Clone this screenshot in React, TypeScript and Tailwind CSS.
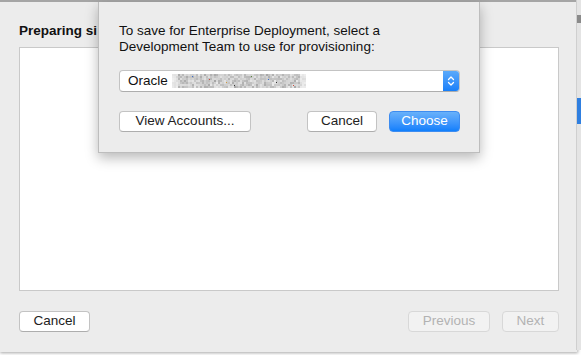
import React from 'react';

const font = { fontFamily: '"Liberation Sans", Arial, sans-serif' };

// blurred team name: a field of gray specks
function Smudge() {
  const cells: React.ReactElement[] = [];
  let seed = 7;
  const rnd = () => {
    seed = (seed * 9301 + 49297) % 233280;
    return seed / 233280;
  };
  for (let y = 0; y < 14; y += 2) {
    for (let x = 0; x < 134; x += 2) {
      const edge = x < 6 || x > 126 ? 0.5 : 1;
      const g = Math.floor(165 + rnd() * 55);
      cells.push(
        <rect key={`${x}-${y}`} x={x} y={y} width={2} height={2} fill={`rgb(${g},${g},${g})`} opacity={edge * (0.6 + rnd() * 0.4)} />
      );
    }
  }
  const dots = ['#3b6fd1', '#d14a3b', '#d19a3b', '#333', '#5a8a3b', '#3b6fd1', '#333', '#d14a3b'];
  dots.forEach((c, i) => {
    cells.push(<rect key={`d${i}`} x={20 + i * 14 + (i % 3) * 3} y={2 + (i % 4) * 3} width={1} height={1} fill={c} />);
  });
  return (
    <svg width="134" height="14" className="ml-1 shrink-0">
      {cells}
    </svg>
  );
}

function MacButton({ children, disabled, primary, className = '' }: { children: React.ReactNode; disabled?: boolean; primary?: boolean; className?: string }) {
  if (primary) {
    return (
      <div className={`h-[21px] rounded-[4px] border border-[#3d8cf0] bg-gradient-to-b from-[#68b1fa] to-[#0d7ffc] text-white text-[13.5px] flex items-center justify-center ${className}`}>
        {children}
      </div>
    );
  }
  return (
    <div
      className={`h-[21px] rounded-[4px] border text-[13.5px] flex items-center justify-center ${
        disabled ? 'bg-[#f2f2f2] border-[#d8d8d8] text-[#b2b2b2]' : 'bg-white border-[#c3c3c3] border-b-[#adadad] text-[#222]'
      } ${className}`}
    >
      {children}
    </div>
  );
}

export default function App() {
  return (
    <div className="w-[581px] h-[355px] relative overflow-hidden bg-white" style={font}>
      {/* window behind, peeking on the right */}
      <div className="absolute right-0 top-0 w-[5px] h-[350px] bg-[#e4e4e4] border-l border-[#cfcfcf]">
        <div className="mt-[15px] h-[8px] bg-[#8a8a8a]" />
        <div className="mt-[75px] h-[26px] bg-[#2f7fe0]" />
      </div>

      {/* main window */}
      <div className="w-[578px] h-[352px] bg-[#ececec] border-t-2 border-[#a5a5a5] border-r border-r-[#d4d4d4] shadow-[0_1px_3px_rgba(0,0,0,0.35)] flex flex-col pl-[19px] pr-[18px]">
        <div className="pt-[21px] h-[45px] w-[79px] overflow-hidden text-[13.5px] font-bold leading-4 text-[#111] whitespace-nowrap">Preparing si</div>
        <div className="h-[244px] bg-white border border-[#c9c9c9]" />
        <div className="mt-[20px] flex items-center">
          <MacButton className="w-[71px]">Cancel</MacButton>
          <div className="flex-1" />
          <MacButton disabled className="w-[82px]">Previous</MacButton>
          <MacButton disabled className="w-[57px] ml-[12px]">Next</MacButton>
        </div>
      </div>

      {/* sheet */}
      <div className="absolute left-[98px] top-[2px] w-[382px] h-[151px] bg-[#ececec] border-l border-r border-b border-[#bdbdbd] shadow-[0_5px_12px_rgba(0,0,0,0.28)] pl-[20px] pr-[19px] pt-[21px] flex flex-col">
        <div className="text-[13.5px] leading-4 text-[#111]">
          To save for Enterprise Deployment, select a
          <br />
          Development Team to use for provisioning:
        </div>
        <div className="mt-[15px] w-[341px] h-[22px] rounded-[4px] bg-white border border-[#c3c3c3] border-b-[#adadad] flex items-center overflow-hidden">
          <span className="pl-[8px] text-[13.5px] text-[#111]">Oracle</span>
          <Smudge />
          <div className="flex-1" />
          <div className="w-[16px] h-full bg-gradient-to-b from-[#5aa9fa] to-[#167ff9] flex items-center justify-center">
            <svg width="8" height="12" viewBox="0 0 8 12" fill="none" stroke="white" strokeWidth="1.3" strokeLinecap="round" strokeLinejoin="round">
              <path d="M1.5 4.5 L4 2 L6.5 4.5" />
              <path d="M1.5 7.5 L4 10 L6.5 7.5" />
            </svg>
          </div>
        </div>
        <div className="mt-[19px] flex items-center">
          <MacButton className="w-[132px]">View Accounts...</MacButton>
          <div className="flex-1" />
          <MacButton className="w-[70px]">Cancel</MacButton>
          <MacButton primary className="w-[71px] ml-[12px]">Choose</MacButton>
        </div>
      </div>
    </div>
  );
}
